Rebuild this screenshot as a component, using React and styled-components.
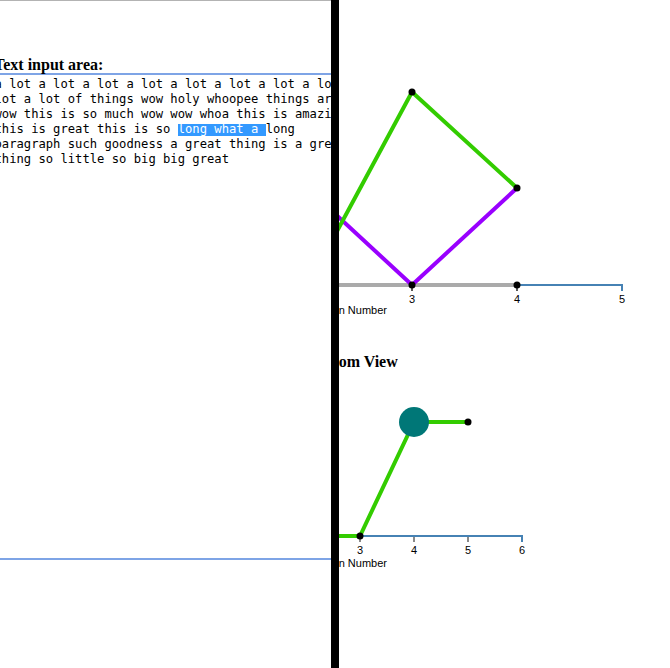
import React from "react";
import styled, { createGlobalStyle } from "styled-components";

const GlobalStyle = createGlobalStyle`
  html, body {
    margin: 0;
    padding: 0;
    background: #fff;
    overflow: hidden;
  }
`;

const Page = styled.div`
  display: flex;
  width: 100vw;
  height: 100vh;
`;

const LeftPane = styled.div`
  box-sizing: border-box;
  width: 331px;
  flex-shrink: 0;
  overflow: hidden;
  border-top: 1px solid #b3b3b3;
`;

// the pane is scrolled a few pixels to the right, so its content starts off-screen
const PaneBody = styled.div`
  width: 420px;
  margin-left: -6px;
`;

const Heading = styled.h3`
  margin: ${(p) => p.$top}px 0 0 ${(p) => p.$shift || 0}px;
  font: bold 16px/${(p) => p.$lh}px "Liberation Serif", "Times New Roman", serif;
  color: #000;
  white-space: nowrap;
`;

const TextBox = styled.div`
  box-sizing: border-box;
  height: 487px;
  margin-left: -3px;
  padding: 2px 1.5px;
  border: 2px solid #7ea4e6;
  font: 12.18px/15px "DejaVu Sans Mono", monospace;
  color: #000;
  white-space: pre;
  overflow: hidden;
`;

const Selected = styled.span`
  color: #fff;
  background: linear-gradient(#3399ff, #3399ff) 0 100% / 100% 12px no-repeat;
`;

const Divider = styled.div`
  width: 8px;
  flex-shrink: 0;
  background: #000;
`;

const RightPane = styled.div`
  flex: 1;
  display: flex;
  flex-direction: column;
  overflow: hidden;
`;

const Chart = styled.svg`
  display: block;
  flex-shrink: 0;
  font-family: "Liberation Sans", Arial, sans-serif;
  font-size: 11px;
`;

const GREEN = "#33cc00";
const PURPLE = "#9900ff";
const AXIS = "#4682b4";

const Axis = ({ y, ticks, end, tickColor, tickWidth, labelY, titleY }) => (
  <g>
    <path d={`M-40 ${y} H${end} V${y + 6}`} fill="none" stroke={AXIS} strokeWidth="2" />
    {ticks.map((t) =>
      t.tick === false ? null : (
        <line key={t.label} x1={t.x} x2={t.x} y1={y + 1} y2={y + 6} stroke={tickColor} strokeWidth={tickWidth} />
      )
    )}
    {ticks.map((t) => (
      <text key={t.label} x={t.x} y={labelY} textAnchor="middle" fill="#000">
        {t.label}
      </text>
    ))}
    <text x="48" y={titleY} textAnchor="end" fill="#000">
      Generation Number
    </text>
  </g>
);

const Dot = ({ x, y, r = 3.5, color = "#000" }) => <circle cx={x} cy={y} r={r} fill={color} />;

export default function App() {
  return (
    <>
      <GlobalStyle />
      <Page>
        <LeftPane>
          <PaneBody>
            <Heading $top={55} $lh={17}>Text input area:</Heading>
            <TextBox>
              <div>a lot a lot a lot a lot a lot a lot a lot a lot a</div>
              <div>lot a lot of things wow holy whoopee things are</div>
              <div>wow this is so much wow wow whoa this is amazing</div>
              <div>
                this is great this is so <Selected>long what a </Selected>long
              </div>
              <div>paragraph such goodness a great thing is a great</div>
              <div>thing so little so big big great</div>
            </TextBox>
          </PaneBody>
        </LeftPane>
        <Divider />
        <RightPane>
          <Chart width="331" height="330">
            <Axis
              y={285}
              end={283}
              ticks={[
                { x: 73, label: "3" },
                { x: 178, label: "4" },
                { x: 283, label: "5", tick: false },
              ]}
              tickColor="#222"
              tickWidth="1.5"
              labelY={302.5}
              titleY={314}
            />
            <line x1="-40" y1="285" x2="178" y2="285" stroke="#aaaaaa" strokeWidth="4" />
            <polyline points="-32,188 73,285 178,188" fill="none" stroke={PURPLE} strokeWidth="4" />
            <polyline points="-32,287 73,92 178,188" fill="none" stroke={GREEN} strokeWidth="4" />
            <Dot x={73} y={92} />
            <Dot x={178} y={188} />
            <Dot x={73} y={285} />
            <Dot x={178} y={285} />
          </Chart>
          <Heading $top={24} $lh={16} $shift={-19}>
            Zoom View
          </Heading>
          <Chart width="331" height="200">
            <Axis
              y={166}
              end={183}
              ticks={[
                { x: 21, label: "3" },
                { x: 75, label: "4" },
                { x: 129, label: "5" },
                { x: 183, label: "6", tick: false },
              ]}
              tickColor="#8a8a8a"
              tickWidth="2"
              labelY={184}
              titleY={196.5}
            />
            <polyline points="-40,166 21,166 75,52 129,52" fill="none" stroke={GREEN} strokeWidth="4" />
            <Dot x={21} y={166} />
            <Dot x={129} y={52} />
            <Dot x={75} y={52} r={15} color="#007777" />
          </Chart>
        </RightPane>
      </Page>
    </>
  );
}
